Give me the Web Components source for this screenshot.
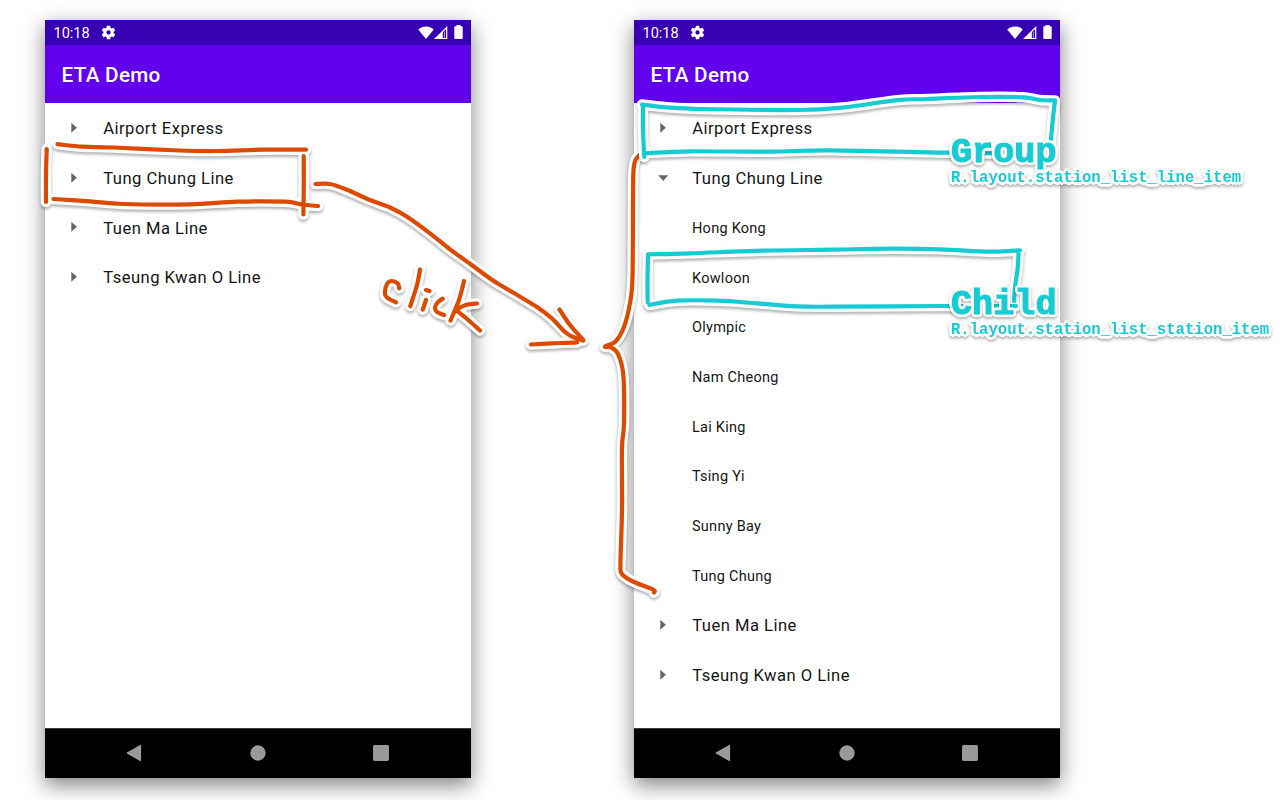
<!DOCTYPE html>
<html lang="en"><head><meta charset="utf-8"><title>ETA Demo</title>
<style>html,body{margin:0;background:#fff}body{width:1280px;height:800px;overflow:hidden}</style></head>
<body>
<eta-board>
 <phone-frame>
  <line-item>Airport Express</line-item>
  <line-item>Tung Chung Line</line-item>
  <line-item>Tuen Ma Line</line-item>
  <line-item>Tseung Kwan O Line</line-item>
 </phone-frame>
 <phone-frame>
  <line-item>Airport Express</line-item>
  <line-item expanded>Tung Chung Line</line-item>
  <station-item>Hong Kong</station-item>
  <station-item>Kowloon</station-item>
  <station-item>Olympic</station-item>
  <station-item>Nam Cheong</station-item>
  <station-item>Lai King</station-item>
  <station-item>Tsing Yi</station-item>
  <station-item>Sunny Bay</station-item>
  <station-item>Tung Chung</station-item>
  <line-item>Tuen Ma Line</line-item>
  <line-item>Tseung Kwan O Line</line-item>
 </phone-frame>
 <sketch-layer slot="overlay"></sketch-layer>
 <note-label slot="overlay" style="left:951px;top:136px">Group<span slot="detail">R.layout.station_list_line_item</span></note-label>
 <note-label slot="overlay" style="left:951px;top:288px">Child<span slot="detail">R.layout.station_list_station_item</span></note-label>
</eta-board>
<script>
const define=(name,html)=>customElements.define(name,class extends HTMLElement{
  constructor(){super();const t=document.createElement('template');t.innerHTML=html;
    this.attachShadow({mode:'open'}).append(t.content.cloneNode(true));}
});

define('eta-board',`<style>
:host{display:block;position:relative;width:1280px;height:800px;background:#fff;overflow:hidden}
.phones{display:flex;gap:163px;padding:20px 0 0 45px}
</style><div class="phones"><slot></slot></div><slot name="overlay"></slot>`);

define('status-bar',`<style>
:host{display:flex;align-items:center;height:25px;box-sizing:border-box;padding:1px 8.500px 0 8.500px;background:#3700b3;color:#fff;font:14.5px/24px Roboto,sans-serif}
.gear{margin-left:11px;margin-bottom:1px}.wifi{margin-left:auto}.cell{margin-left:0}.bat{margin-left:5.500px}
svg{display:block;fill:#fff}
.wifi,.cell,.bat{margin-bottom:2px}
span{padding-top:1px}
</style><span>10:18</span>
<svg class="gear" width="15" height="15" viewBox="1.5 1.5 21 21"><path fill-rule="evenodd" d="M19.14 12.94c.04-.3.06-.61.06-.94s-.02-.64-.07-.94l2.03-1.58a.49.49 0 0 0 .12-.61l-1.92-3.32a.49.49 0 0 0-.59-.22l-2.39.96a7 7 0 0 0-1.62-.94l-.36-2.54A.48.48 0 0 0 13.92 2.400h-3.840a.48.48 0 0 0-.47.41l-.36 2.540a7.300 7.300 0 0 0-1.620.94l-2.390-.96a.48.48 0 0 0-.59.22L2.740 8.870a.48.48 0 0 0 .12.61l2.030 1.580a6 6 0 0 0 0 1.880l-2.030 1.580a.49.49 0 0 0-.12.61l1.920 3.320c.12.22.37.29.59.22l2.390-.96c.5.38 1.030.7 1.620.94l.36 2.540c.05.24.24.41.48.41h3.840c.24 0 .44-.17.47-.41l.36-2.540a7 7 0 0 0 1.620-.94l2.390.96c.22.08.47 0 .59-.22l1.920-3.320a.48.48 0 0 0-.12-.61zM12 15a3 3 0 1 1 0-6 3 3 0 0 1 0 6z"/></svg>
<svg class="wifi" width="16" height="13" viewBox="0 0 16 13"><path d="M.2 3.500C4.500-.4 11.500-.4 15.800 3.500L8 13z"/></svg>
<svg class="cell" width="14" height="13" viewBox="0 0 14 13"><path fill-rule="evenodd" d="M0 13 13.300 0V13zM8.800 6.200V11.900H12.100V3z"/><path d="M9.900 5.800h1.100v6.100H9.900z" opacity=".55"/></svg>
<svg class="bat" width="9" height="14" viewBox="0 0 9 14"><path d="M2.500 1.300V0h4v1.300h1.200q1 0 1 1V13q0 1-1 1H1.300q-1 0-1-1V2.300q0-1 1-1z"/></svg>`);

define('app-bar',`<style>
:host{display:flex;align-items:center;height:58px;box-sizing:border-box;padding:2px 16.500px 0;background:#6200ee;color:#fff;font:500 20.7px/1 Roboto,sans-serif;letter-spacing:.3px}
</style><slot></slot>`);

define('nav-bar',`<style>
:host{display:flex;align-items:center;justify-content:space-between;height:50px;box-sizing:border-box;padding:0 82px 1px 81px;background:#000;border-top:1px solid #3c3c3c}
svg{display:block;fill:#999;stroke:#b5b5b5;stroke-width:.8}
</style>
<svg width="16" height="18" viewBox="0 0 16 18"><path d="M.9 9 14.600 1.200V16.800z"/></svg>
<svg width="16" height="16" viewBox="0 0 16 16"><circle cx="8" cy="8" r="7.200"/></svg>
<svg width="16" height="16" viewBox="0 0 16 16"><rect x=".6" y=".6" width="14.800" height="14.800" rx=".5"/></svg>`);

define('phone-frame',`<style>
:host{display:flex;flex-direction:column;flex:none;width:426px;height:758px;background:#fff;box-shadow:0 7px 20px rgba(0,0,0,.5)}
main{flex:1;min-height:0;display:flex;flex-direction:column}
</style><status-bar></status-bar><app-bar>ETA Demo</app-bar><main><slot></slot></main><nav-bar></nav-bar>`);

define('line-item',`<style>
:host{display:flex;align-items:center;flex:none;height:49.73px;padding-left:24px;color:#151515;font:16.6px/17px Roboto,sans-serif;letter-spacing:.48px;box-sizing:border-box}
svg{flex:none;margin-right:24.200px;fill:#666}
:host([expanded]) svg{transform:rotate(90deg)}
span{padding-top:1.600px}
</style><svg width="10" height="12" viewBox="0 0 10 12"><path d="M2.300 .8 7.900 5.800 2.300 10.800z"/></svg><span><slot></slot></span>`);

define('station-item',`<style>
:host{display:flex;align-items:center;flex:none;height:49.73px;padding:2.200px 0 0 58px;color:#151515;font:14.5px/15px Roboto,sans-serif;letter-spacing:.26px;box-sizing:border-box}
</style><slot></slot>`);

/* White outline built from shadows placed on a ring round the glyphs. */
const ring=r=>Array.from({length:20},(_,i)=>{
  const a=i*Math.PI/10;return `${(r*Math.cos(a)).toFixed(2)}px ${(r*Math.sin(a)).toFixed(2)}px 0 #fff`;
}).join(',');
define('note-label',`<style>
:host{position:absolute;display:flex;flex-direction:column;color:#17cbd3;font:bold 35.2px/34px "Liberation Mono",monospace;white-space:nowrap;filter:drop-shadow(0 2px 1.500px rgba(0,0,0,.3))}
b{-webkit-text-stroke:1.100px #17cbd3;text-shadow:${ring(3)}}
small{font-size:15.6px;line-height:16px;text-shadow:${ring(2.6)},${ring(1.4)}}
</style><b><slot></slot></b><small><slot name="detail"></slot></small>`);

/* Smooths a list of points into a pen stroke. */
const stroke=p=>{
  const n=p.length;let d=`M${p[0]}`;
  for(let i=0;i<n-1;i++){
    const a=p[i-1]||p[i],b=p[i],c=p[i+1],e=p[i+2]||c;
    d+=`C${b[0]+(c[0]-a[0])/6} ${b[1]+(c[1]-a[1])/6} ${c[0]-(e[0]-b[0])/6} ${c[1]-(e[1]-b[1])/6} ${c}`;
  }
  return d;
};
const orange=[
 [[57.5,144.2],[83,146.7],[113,147.5],[180,150.500],[217,151],[263,149.700],[306,149.700]],
 [[46.700,149],[46,176],[46,202]],
 [[303.700,156],[303.800,185],[303.400,214.500]],
 [[53.500,199],[90,201.300],[123,204],[190,204.300],[237,201.700],[285,201.700],[302,204.500],[318,206]],
 [[315.500,184],[330,184],[347,189.800],[370,200],[390,207.500],[407,216.700],[430,233.300],[450,249.300],[472,265.200],[493,280.500],[513.500,292.800],[537,307],[552,318.500],[565,332],[573,337],[583.300,340.500]],
 [[559.500,309.500],[570,325],[583.300,340]],
 [[577,342.500],[560,343],[531,344.500]],
 [[399.300,288.300],[397.800,283.500],[391.700,281],[387.300,283.500],[384.800,292.500],[387,297.500],[396,302.300]],
 [[420,269.500],[417,285],[410.300,306]],
 [[426,290],[429.500,291]],
 [[426,300],[422.800,309.500]],
 [[442.700,298.700],[437.700,302.300],[435,307.300],[437,312],[444,315]],
 [[464,281],[459,300],[450.500,320.500]],
 [[477,303.500],[466.700,304.800],[455,310]],
 [[456,310],[468.300,320],[480,330.500]],
 [[640,154.500],[635.500,160],[633.500,170],[633,200],[632.500,277],[630,303],[624,327],[615.500,341.500],[605,346.500],[611,347.500],[618,354],[623.300,375],[624,423],[622,448],[622,510],[620.500,563],[622,574],[633,581.500],[653,589.500],[654,592.500]]
];
const cyan=[
 [[642,104.500],[667,107.300],[703,109],[797,110],[843,107.500],[897,100.200],[927,99],[980,97],[1023,97.300],[1040,100],[1055,100.400]],
 [[1055,101],[1053,118],[1050.700,142],[1050,150]],
 [[643,105],[643,130],[644.300,157]],
 [[644,153.300],[690,151.300],[770,151.700],[830,150.300],[948,152.700],[1000,153.500]],
 [[648,254.300],[690,253.300],[763,250.700],[830,249.700],[890,248.700],[940,249.300],[990,251.700],[1020,250.300]],
 [[648,255],[647.500,280],[647.700,302.500]],
 [[1018.500,254],[1017.500,270],[1015,287],[1014,301]],
 [[649.500,305],[677,300.700],[717,300.700],[757,303.300],[797,306.300],[830,306.700],[940,306],[1016,306]]
];
const layer=(list,color)=>{
  const d=list.map(stroke).join('');
  return `<g><path class="halo" d="${d}"/><path d="${d}" stroke="${color}" stroke-width="4.200"/></g>`;
};
define('sketch-layer',`<style>
:host{position:absolute;inset:0;display:block}
svg{display:block;fill:none;stroke-linecap:round;stroke-linejoin:round}
.halo{stroke:#fff;stroke-width:10.500;filter:drop-shadow(0 2px 1.500px rgba(0,0,0,.32))}
</style><svg width="1280" height="800" viewBox="0 0 1280 800">${layer(orange,'#dc4a00')}${layer(cyan,'#17cbd3')}</svg>`);
</script>
</body></html>
